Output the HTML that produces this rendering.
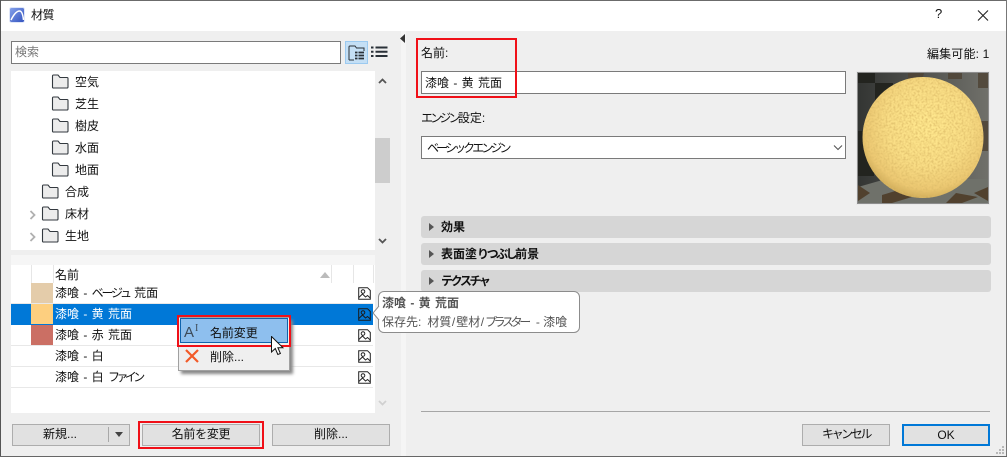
<!DOCTYPE html>
<html lang="ja"><head><meta charset="utf-8"><title>材質</title>
<style>
html,body{margin:0;padding:0;background:#efefef}
#w{position:relative;width:1007px;height:457px;overflow:hidden;background:#efefef;font:12px/16px "Liberation Sans","Noto Sans CJK JP",sans-serif;color:#111}
#w div,#w svg{position:absolute}
.t{white-space:nowrap}
.box{background:#fff;border:1px solid #7a7a7a;box-sizing:border-box}
.btn{background:#e1e1e1;border:1px solid #adadad;box-sizing:border-box;text-align:center;line-height:19px;height:22px;top:424px}
.bar{left:421px;width:570px;height:22px;background:#d6d6d6;border-radius:3px;font-weight:bold;line-height:23px;text-indent:20px}
.bar:before{content:"";position:absolute;left:8px;top:7px;border-left:5px solid #555;border-top:4px solid transparent;border-bottom:4px solid transparent}
.row{left:11px;width:362px;height:21px;border-bottom:1px solid #e8e8e8;box-sizing:border-box}
.row .t{left:44px;top:2px;word-spacing:1px}
.red{border:2px solid #f01018;box-sizing:border-box}
</style></head><body>
<div id="w">
<svg width="0" height="0" style="position:absolute"><defs>
<g id="f"><path d="M1.500 13.500V2a1 1 0 0 1 1-1h4.500l2 2.500h7a1 1 0 0 1 1 1V13a1 1 0 0 1-1 1H2.500a1 1 0 0 1-1-.5z" fill="#ececec" stroke="#33393f" stroke-width="1.100"/></g>
<g id="i"><path d="M.7.7H9.500L12.300 3.500V12.300H.7Z" fill="#fff" stroke="#222" stroke-width="1"/><path d="M.8 10.500L4.500 7l3 3 2-1.500 2.800 2.500" fill="none" stroke="#222"/><circle cx="5" cy="4.500" r="1.800" fill="none" stroke="#222"/></g>
<filter id="n" x="0" y="0" width="100%" height="100%"><feTurbulence type="fractalNoise" baseFrequency=".5" numOctaves="2" seed="4"/><feColorMatrix values="0 0 0 0 .72  0 0 0 0 .5  0 0 0 0 .14  3 0 0 0 -1.200"/><feComposite in2="SourceGraphic" operator="in"/></filter>
<radialGradient id="s" cx=".54" cy=".4" r=".62"><stop offset="0" stop-color="#ffe88e"/><stop offset=".55" stop-color="#f9dd85"/><stop offset=".85" stop-color="#ecc872"/><stop offset="1" stop-color="#c9a553"/></radialGradient>
<linearGradient id="wall" x1="0" x2="1"><stop offset="0" stop-color="#333533"/><stop offset="1" stop-color="#70706a"/></linearGradient>
<linearGradient id="lg" x1="0" y1="0" x2="1" y2="1"><stop offset="0" stop-color="#88a4ec"/><stop offset="1" stop-color="#2f50bd"/></linearGradient>
</defs></svg>

<!-- window frame -->
<div style="left:0;top:0;width:1007px;height:1px;background:#6b6b6b"></div>
<div style="left:0;top:1px;width:1007px;height:30px;background:#fff"></div>
<div style="left:0;top:0;width:1px;height:457px;background:#555"></div>
<div style="left:1006px;top:0;width:1px;height:457px;background:#777"></div>
<div style="left:0;top:456px;width:1007px;height:1px;background:#666"></div>

<!-- title -->
<svg style="left:9px;top:7px" width="16" height="16" viewBox="0 0 16 16"><rect x=".5" y=".5" width="15" height="15" rx="2" fill="url(#lg)" stroke="#dfe6f8"/><path d="M2 13C5 7 8 4 10.500 4C13 4 14 8 14.500 13" fill="none" stroke="#fff" stroke-width="1.500"/></svg>
<div class="t" style="left:31px;top:7px;font-size:12px;letter-spacing:-.5px">材質</div>
<div class="t" style="left:935px;top:6px;font-size:13px">?</div>
<svg style="left:977px;top:9px" width="12" height="13" viewBox="0 0 12 13"><path d="M1 1.500l10 10M11 1.500l-10 10" stroke="#222" stroke-width="1.100" fill="none"/></svg>

<!-- search -->
<div class="box" style="left:11px;top:41px;width:330px;height:23px"></div>
<div class="t" style="left:15px;top:44px;color:#777">検索</div>
<div style="left:345px;top:41px;width:23px;height:23px;background:#c4dff5;border:1px solid #9ccaf0;box-sizing:border-box"></div>
<svg style="left:347px;top:44px" width="20" height="18" viewBox="0 0 20 18"><path d="M2 16V3a1 1 0 0 1 1-1h5l1.500 2H17V7M2 16h5" fill="none" stroke="#2a3138" stroke-width="1"/><path d="M8 8.500h9M8 11.500h9M8 14.500h9" stroke="#2a3138" stroke-width="1.800"/><path d="M11 7.500v8" stroke="#c4dff5"/></svg>
<svg style="left:371px;top:46px" width="17" height="12" viewBox="0 0 17 12"><path d="M0 1.500h2.500M4.500 1.500H16.500M0 5.800h2.500M4.500 5.800H16.500M0 10h2.500M4.500 10H16.500" stroke="#2a3138" stroke-width="2"/></svg>

<!-- tree -->
<div style="left:11px;top:71px;width:364px;height:179px;background:#fff"></div>
<div style="left:375px;top:138px;width:15px;height:45px;background:#cdcdcd"></div>
<svg style="left:378px;top:77px" width="9" height="7"><path d="M1 6l3.500-3.500L8 6" fill="none" stroke="#555" stroke-width="1.800"/></svg>
<svg style="left:378px;top:238px" width="9" height="7"><path d="M1 1l3.500 3.500L8 1" fill="none" stroke="#555" stroke-width="1.800"/></svg>

<svg style="left:51px;top:74px" width="20" height="16"><use href="#f"/></svg><div class="t" style="left:75px;top:74px">空気</div>
<svg style="left:51px;top:96px" width="20" height="16"><use href="#f"/></svg><div class="t" style="left:75px;top:96px">芝生</div>
<svg style="left:51px;top:118px" width="20" height="16"><use href="#f"/></svg><div class="t" style="left:75px;top:118px">樹皮</div>
<svg style="left:51px;top:140px" width="20" height="16"><use href="#f"/></svg><div class="t" style="left:75px;top:140px">水面</div>
<svg style="left:51px;top:162px" width="20" height="16"><use href="#f"/></svg><div class="t" style="left:75px;top:162px">地面</div>
<svg style="left:41px;top:184px" width="20" height="16"><use href="#f"/></svg><div class="t" style="left:65px;top:184px">合成</div>
<svg style="left:41px;top:206px" width="20" height="16"><use href="#f"/></svg><div class="t" style="left:65px;top:206px">床材</div>
<svg style="left:41px;top:228px" width="20" height="16"><use href="#f"/></svg><div class="t" style="left:65px;top:228px">生地</div>
<svg style="left:29px;top:210px" width="8" height="10"><path d="M1.500 1l4 4-4 4" fill="none" stroke="#b0b0b0" stroke-width="1.800"/></svg>
<svg style="left:29px;top:232px" width="8" height="10"><path d="M1.500 1l4 4-4 4" fill="none" stroke="#b0b0b0" stroke-width="1.800"/></svg>

<!-- list -->
<div style="left:11px;top:255px;width:364px;height:10px;background:#f6f6f6"></div>
<div style="left:11px;top:265px;width:364px;height:148px;background:#fff"></div>
<div style="left:31px;top:265px;width:1px;height:18px;background:#e6e6e6"></div>
<div style="left:53px;top:265px;width:1px;height:18px;background:#e6e6e6"></div>
<div style="left:331px;top:265px;width:1px;height:18px;background:#e6e6e6"></div>
<div style="left:353px;top:265px;width:1px;height:18px;background:#e6e6e6"></div>
<div style="left:373px;top:265px;width:1px;height:18px;background:#e6e6e6"></div>
<div class="t" style="left:55px;top:267px">名前</div>
<svg style="left:320px;top:272px" width="10" height="6"><path d="M0 6L5 0l5 6z" fill="#bbb"/></svg>

<div class="row" style="top:283px"><div class="t">漆喰 - <span style="letter-spacing:-2.200px">ベージュ</span> 荒面</div></div>
<div class="row" style="top:304px;background:#0078d7;border:0;color:#fff"><div class="t">漆喰 - 黄 荒面</div></div>
<div class="row" style="top:325px"><div class="t">漆喰 - 赤 荒面</div></div>
<div class="row" style="top:346px"><div class="t">漆喰 - 白</div></div>
<div class="row" style="top:367px"><div class="t">漆喰 - 白 <span style="letter-spacing:-3.600px">ファイン</span></div></div>
<div style="left:31px;top:283px;width:22px;height:20px;background:#e4ccaa"></div>
<div style="left:31px;top:304px;width:22px;height:20px;background:#fdcf7f"></div>
<div style="left:31px;top:325px;width:22px;height:20px;background:#cb6f64"></div>
<svg style="left:358px;top:287px" width="13" height="13"><use href="#i"/></svg>
<svg style="left:358px;top:308px" width="13" height="13"><path d="M.7.7H9.500L12.300 3.500V12.300H.7Z" fill="none" stroke="#1a1a1a"/><path d="M.8 10.500L4.500 7l3 3 2-1.500 2.800 2.500" fill="none" stroke="#1a1a1a"/><circle cx="5" cy="4.500" r="1.800" fill="none" stroke="#1a1a1a"/></svg>
<svg style="left:358px;top:329px" width="13" height="13"><use href="#i"/></svg>
<svg style="left:358px;top:350px" width="13" height="13"><use href="#i"/></svg>
<svg style="left:358px;top:371px" width="13" height="13"><use href="#i"/></svg>
<svg style="left:378px;top:400px" width="9" height="7"><path d="M1 1l3.500 3.500L8 1" fill="none" stroke="#d0d0d0" stroke-width="1.800"/></svg>

<!-- left buttons -->
<div class="btn" style="left:12px;width:118px;text-indent:-22px">新規...</div>
<div style="left:108px;top:427px;width:1px;height:15px;background:#a8a8a8"></div>
<svg style="left:115px;top:432px" width="8" height="5"><path d="M0 0h8L4 5z" fill="#444"/></svg>
<div class="red" style="left:138px;top:421px;width:126px;height:28px"></div>
<div class="btn" style="left:142px;width:118px;letter-spacing:-.3px">名前を変更</div>
<div class="btn" style="left:272px;width:118px">削除...</div>

<!-- right strip -->
<div style="left:401px;top:31px;width:5px;height:425px;background:#f5f5f5"></div>
<svg style="left:400px;top:34px" width="5" height="9"><path d="M5 0v9L0 4.500z" fill="#333"/></svg>

<!-- right form -->
<div class="t" style="left:421px;top:45px">名前:</div>
<div class="box" style="left:421px;top:71px;width:425px;height:23px"></div>
<div class="t" style="left:425px;top:75px;word-spacing:1px">漆喰 - 黄 荒面</div>
<div class="red" style="left:416px;top:38px;width:101px;height:60px"></div>
<div class="t" style="left:421px;top:110px"><span style="letter-spacing:-2.800px">エンジン</span>設定:</div>
<div class="box" style="left:421px;top:136px;width:425px;height:23px"></div>
<div class="t" style="left:427px;top:140px;letter-spacing:-2.900px">ベーシックエンジン</div>
<svg style="left:833px;top:145px" width="10" height="6"><path d="M1 .5l4 4 4-4" fill="none" stroke="#555" stroke-width="1.100"/></svg>
<div class="t" style="left:927px;top:46px;letter-spacing:.15px">編集可能: 1</div>

<!-- preview -->
<svg style="left:856px;top:71px" width="134" height="134" viewBox="0 0 134 134">
<rect width="134" height="134" fill="#e9e9e9"/>
<rect x="1" y="1" width="132" height="132" fill="#8d8d8d"/>
<rect x="2" y="2" width="130" height="130" fill="url(#wall)"/>
<path d="M2 2H19V12H2ZM19 12H37V32H19ZM2 60H18V105H2Z" fill="#23241f"/>
<path d="M52 2H68L66 10H52ZM92 2h14V8H92ZM122 2h10V17H122ZM116 50h16V80H116Z" fill="#4f4436" opacity=".85"/>
<path d="M2 116L30 108H132V132H2Z" fill="#6f716a"/>
<path d="M2 114L14 122 2 130ZM26 124L46 118 56 126 36 132H26ZM90 132L100 122 122 126 106 132ZM118 122L132 116V130Z" fill="#51412e"/>
<circle cx="67" cy="66.500" r="60.500" fill="url(#s)"/>
<circle cx="67" cy="66.500" r="60.500" fill="#fff" filter="url(#n)" opacity=".7"/>
</svg>

<!-- accordion -->
<div class="bar t" style="top:216px">効果</div>
<div class="bar t" style="top:243px">表面塗<span style="letter-spacing:-2.500px">りつぶし</span>前景</div>
<div class="bar t" style="top:270px;letter-spacing:-2.400px">テクスチャ</div>

<!-- tooltip -->
<div style="left:378px;top:291px;width:202px;height:42px;background:#fff;border:1px solid #8c8c8c;border-radius:6px;box-sizing:border-box"></div>
<svg style="left:372px;top:306px" width="8" height="14"><path d="M7 0L1 7l6 7" fill="#fff" stroke="#8c8c8c"/><path d="M7.500 1v12" stroke="#fff" stroke-width="1.500"/></svg>
<div class="t" style="left:382px;top:295px;font-weight:bold;color:#555;word-spacing:1px">漆喰 - 黄 荒面</div>
<div class="t" style="left:382px;top:314px;color:#555">保存先:<span style="margin-left:6px">材質</span><span style="letter-spacing:1px;margin-left:.5px">/</span>壁材<span style="letter-spacing:1px;margin-left:.5px">/</span><span style="letter-spacing:-3.400px">プラスター</span><span style="margin-left:8px;word-spacing:0">- 漆喰</span></div>

<!-- context menu -->
<div style="left:178px;top:317px;width:112px;height:54px;background:#efefef;border:1px solid #a0a0a0;box-sizing:border-box;box-shadow:3px 3px 3px #888"></div>
<div style="left:180px;top:318px;width:108px;height:25px;background:#8ebfee;border:1px solid #0f63ad;box-sizing:border-box"></div>
<div class="red" style="left:177px;top:315px;width:114px;height:32px"></div>
<div class="t" style="left:184px;top:325px;font-size:15px;color:#3d4a58">A</div>
<div class="t" style="left:195px;top:321px;font-size:10px;color:#3d4a58;font-family:'Liberation Serif',serif">I</div>
<div class="t" style="left:210px;top:325px;letter-spacing:-.1px">名前変更</div>
<svg style="left:185px;top:349px" width="14" height="14"><path d="M1 1l12 12M13 1L1 13" stroke="#f25a28" stroke-width="2.200" fill="none"/></svg>
<div class="t" style="left:210px;top:349px">削除...</div>
<svg style="left:271px;top:336px" width="13" height="20" viewBox="0 0 13 20"><path d="M.5.500V16l3.800-3.500 2.500 6 2.600-1-2.500-5.800h5Z" fill="#fff" stroke="#111" stroke-width="1"/></svg>

<!-- footer -->
<div style="left:421px;top:411px;width:569px;height:1px;background:#a6a6a6"></div>
<div class="btn" style="left:802px;width:88px;letter-spacing:-2.400px">キャンセル</div>
<div class="btn" style="left:902px;width:88px;border:2px solid #0078d7;line-height:18px">OK</div>
<svg style="left:995px;top:445px" width="10" height="10"><path d="M7 1h2v2H7zM4 4h2v2H4zM7 4h2v2H7zM1 7h2v2H1zM4 7h2v2H4zM7 7h2v2H7z" fill="#b8b8b8"/></svg>
</div>
</body></html>
